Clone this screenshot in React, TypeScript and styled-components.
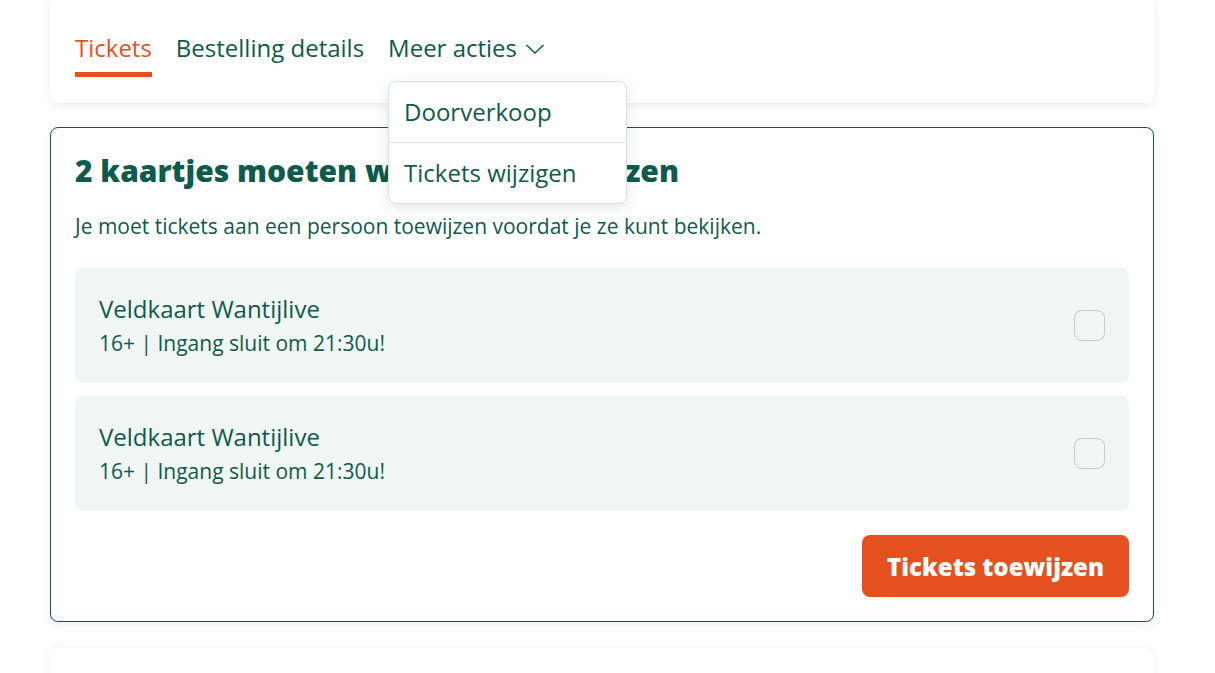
import React from 'react';
import styled, { createGlobalStyle } from 'styled-components';

const GlobalStyle = createGlobalStyle`
	body {
		margin: 0;
		background: #ffffff;
		font-family: 'Open Sans', 'Noto Sans', sans-serif;
		color: #0f5a4a;
	}
	* { box-sizing: border-box; }
`;

const tickets = [
	{ title: 'Veldkaart Wantijlive', info: '16+ | Ingang sluit om 21:30u!' },
	{ title: 'Veldkaart Wantijlive', info: '16+ | Ingang sluit om 21:30u!' },
];

export default function App() {
	return (
		<>
			<GlobalStyle />
			<Page>
				<TabCard>
					<Tabs>
						<Tab $active>Tickets</Tab>
						<Tab>Bestelling details</Tab>
						<MenuTab>
							<Tab>
								Meer acties
								<Chevron width="20" height="12" viewBox="0 0 20 12">
									<polyline points="1.5,2 10,10 18.5,2" fill="none" stroke="#0f5a4a" strokeWidth="1.5" />
								</Chevron>
							</Tab>
							<Dropdown>
								<DropItem>Doorverkoop</DropItem>
								<DropItem>Tickets wijzigen</DropItem>
							</Dropdown>
						</MenuTab>
					</Tabs>
				</TabCard>

				<AssignCard>
					<Title>2 kaartjes moeten worden toegewezen</Title>
					<Description>Je moet tickets aan een persoon toewijzen voordat je ze kunt bekijken.</Description>
					<TicketList>
						{tickets.map((t, i) => (
							<TicketRow key={i}>
								<div>
									<TicketName>{t.title}</TicketName>
									<TicketInfo>{t.info}</TicketInfo>
								</div>
								<Checkbox />
							</TicketRow>
						))}
					</TicketList>
					<Actions>
						<AssignButton>Tickets toewijzen</AssignButton>
					</Actions>
				</AssignCard>

				<EmptyCard />
			</Page>
		</>
	);
}

const Page = styled.div`
	display: flex;
	flex-direction: column;
	gap: 24px;
	padding: 0 61px 0 50px;
	height: 673px;
	overflow: hidden;
`;

const TabCard = styled.div`
	position: relative;
	z-index: 2;
	background: #fff;
	border-radius: 0 0 8px 8px;
	box-shadow: 0 2px 10px rgba(40, 70, 60, 0.1);
	padding: 30px 25px 26px;
`;

const Tabs = styled.div`
	display: flex;
	gap: 24px;
`;

const Tab = styled.div<{ $active?: boolean }>`
	display: flex;
	align-items: center;
	font-size: 24px;
	line-height: 36px;
	color: ${({ $active }) => ($active ? '#e4511f' : '#0f5a4a')};
	border-bottom: 5px solid ${({ $active }) => ($active ? '#e4511f' : 'transparent')};
	padding-bottom: 6px;
	cursor: pointer;
`;

const Chevron = styled.svg`
	margin-left: 8px;
	margin-top: 2px;
`;

const MenuTab = styled.div`
	position: relative;
`;

const Dropdown = styled.div`
	position: absolute;
	top: 51px;
	left: 0;
	width: 239px;
	background: #fff;
	border: 1px solid #d6e3de;
	border-radius: 8px;
	box-shadow: 0 4px 14px rgba(40, 70, 60, 0.12);
	z-index: 5;
`;

const DropItem = styled.div`
	font-size: 24px;
	line-height: 30px;
	padding: 15px 15px;
	color: #0f5a4a;
	& + & {
		border-top: 1px solid #dde8e4;
	}
`;

const AssignCard = styled.div`
	position: relative;
	z-index: 1;
	background: #fff;
	border: 1px solid #0f5a4a;
	border-radius: 8px;
	box-shadow: 0 3px 8px rgba(40, 70, 60, 0.08);
	padding: 23px 24px 24px;
`;

const Title = styled.h2`
	margin: 0;
	font-size: 30px;
	font-weight: 800;
	line-height: 40px;
	color: #0f5a4a;
`;

const Description = styled.p`
	margin: 21px 0 0;
	font-size: 21px;
	line-height: 28px;
`;

const TicketList = styled.div`
	display: flex;
	flex-direction: column;
	gap: 13px;
	margin-top: 28px;
`;

const TicketRow = styled.div`
	display: flex;
	align-items: center;
	justify-content: space-between;
	height: 115px;
	padding: 0 24px;
	background: #f0f6f3;
	border-radius: 8px;
`;

const TicketName = styled.div`
	font-size: 24px;
	line-height: 32px;
`;

const TicketInfo = styled.div`
	font-size: 21px;
	line-height: 30px;
	margin-top: 3px;
`;

const Checkbox = styled.div`
	width: 31px;
	height: 31px;
	border: 1px solid #b9d3c6;
	border-radius: 8px;
	background: transparent;
`;

const Actions = styled.div`
	display: flex;
	justify-content: flex-end;
	margin-top: 24px;
`;

const AssignButton = styled.button`
	height: 62px;
	padding: 0 25px;
	border: none;
	border-radius: 8px;
	background: #e4511f;
	color: #fff;
	font-family: 'Open Sans', 'Noto Sans', sans-serif;
	font-size: 24px;
	font-weight: 800;
	cursor: pointer;
`;

const EmptyCard = styled.div`
	flex: 1;
	flex-shrink: 0;
	min-height: 40px;
	margin-top: 2px;
	background: #fff;
	border-radius: 8px 8px 0 0;
	box-shadow: 0 0 8px rgba(40, 70, 60, 0.07);
`;
